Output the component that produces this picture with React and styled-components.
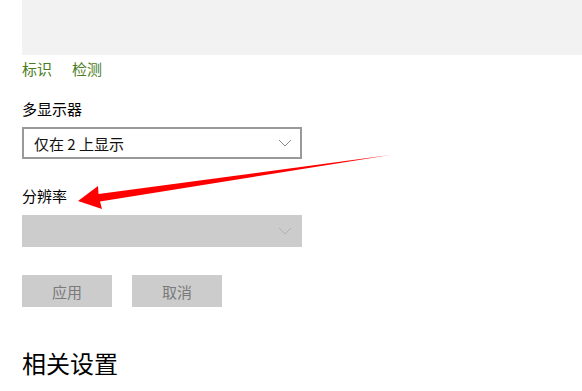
import styled, { createGlobalStyle } from 'styled-components';

const Global = createGlobalStyle`
	body {
		margin: 0;
		background: #fff;
		font-family: "Noto Sans CJK SC", "Noto Sans", sans-serif;
		color: #000;
		overflow: hidden;
	}
`;

const Page = styled.div`
	position: relative;
	width: 582px;
	height: 391px;
	padding-left: 22px;
	box-sizing: border-box;
	display: flex;
	flex-direction: column;
`;

const Preview = styled.div`
	height: 55px;
	background: #f2f2f2;
	margin-right: -22px;
`;

const Links = styled.div`
	display: flex;
	gap: 20px;
	margin-top: 3px;
	height: 20px;
	align-items: center;
`;

const Link = styled.span`
	font-size: 15px;
	color: #4a7d22;
`;

const Label = styled.div`
	font-size: 15px;
	height: 20px;
	line-height: 20px;
	margin-top: ${(p) => p.$top}px;
`;

const Select = styled.div`
	width: 280px;
	height: 32px;
	box-sizing: border-box;
	margin-top: ${(p) => p.$top}px;
	border: 2px solid ${(p) => (p.$disabled ? '#cccccc' : '#999999')};
	background: ${(p) => (p.$disabled ? '#cccccc' : '#fff')};
	display: flex;
	align-items: center;
	justify-content: space-between;
	padding: 0 8px 0 10px;
	font-size: 15px;
	color: #111;
`;

const Chevron = ({ color }) => (
	<svg width="14" height="8" viewBox="0 0 14 8">
		<path d="M1 1 L7 7 L13 1" fill="none" stroke={color} strokeWidth="1" />
	</svg>
);

const Buttons = styled.div`
	display: flex;
	gap: 20px;
	margin-top: 28px;
`;

const Button = styled.div`
	width: 90px;
	height: 32px;
	background: #cccccc;
	color: #7a7a7a;
	font-size: 15px;
	display: flex;
	align-items: center;
	justify-content: center;
`;

const Heading = styled.h2`
	margin: 41px 0 0;
	font-size: 24px;
	font-weight: 400;
	line-height: 30px;
`;

const Arrow = styled.svg`
	position: absolute;
	left: 0;
	top: 0;
	pointer-events: none;
`;

export default function App() {
	return (
		<>
			<Global />
			<Page>
				<Preview />
				<Links>
					<Link>标识</Link>
					<Link>检测</Link>
				</Links>
				<Label $top={21}>多显示器</Label>
				<Select $top={8}>
					<span>仅在 2 上显示</span>
					<Chevron color="#8a8a8a" />
				</Select>
				<Label $top={27}>分辨率</Label>
				<Select $top={9} $disabled>
					<span />
					<Chevron color="#b0b0b0" />
				</Select>
				<Buttons>
					<Button>应用</Button>
					<Button>取消</Button>
				</Buttons>
				<Heading>相关设置</Heading>
				<Arrow width="582" height="391" viewBox="0 0 582 391">
					<path
						d="M78 201 L98 186 L98.5 194 L390 155 L100 201.5 L102 209 Z"
						fill="#ff0000"
					/>
				</Arrow>
			</Page>
		</>
	);
}
